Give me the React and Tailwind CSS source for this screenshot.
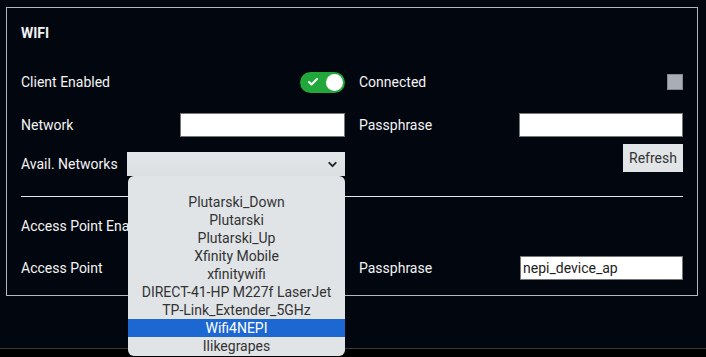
import { Check, ChevronDown } from 'lucide-react'

const networks = [
  'Plutarski_Down',
  'Plutarski',
  'Plutarski_Up',
  'Xfinity Mobile',
  'xfinitywifi',
  'DIRECT-41-HP M227f LaserJet',
  'TP-Link_Extender_5GHz',
  'Wifi4NEPI',
  'Ilikegrapes',
]

function Toggle() {
  return (
    <div className="flex h-[21px] w-[45px] items-center justify-between rounded-full bg-[#22a73a] pl-[7px] pr-[2px]">
      <Check size={12} strokeWidth={4} className="text-white" />
      <div className="h-[17px] w-[17px] rounded-full bg-white" />
    </div>
  )
}

function TextInput({ value = '', className = '' }) {
  return (
    <div className={`flex h-[24px] items-center border border-[#767676] bg-white px-[2px] text-[14px] text-[#222] ${className}`}>
      {value}
    </div>
  )
}

export default function App() {
  return (
    <div className="flex h-[357px] w-[706px] flex-col overflow-hidden bg-[#02070f] font-['Roboto',sans-serif] text-[14px] text-[#f4f4f4]">
      <div className="flex-1 pl-[6px] pt-[7px]">
        <div className="h-[289px] w-[692px] border border-[#b3b7bb] pl-[14px] pr-[14px] pt-[15px]">
          <h2 className="h-[20px] font-bold leading-[20px]">WIFI</h2>

          <div className="mt-[27px] grid grid-cols-2 gap-x-[14px]">
            {/* left column */}
            <div className="flex flex-col">
              <div className="flex h-[24px] items-center justify-between">
                <span>Client Enabled</span>
                <Toggle />
              </div>
              <div className="mt-[19px] flex h-[24px] items-center justify-between">
                <span>Network</span>
                <TextInput className="w-[165px]" />
              </div>
              <div className="mt-[15px] flex h-[24px] items-center justify-between">
                <span>Avail. Networks</span>
                <div className="relative">
                  <div className="flex h-[24px] w-[218px] items-center justify-end bg-gradient-to-b from-[#e4e7ea] to-[#dcdfe2] pr-[6px]">
                    <ChevronDown size={13} strokeWidth={3.5} className="text-[#222]" />
                  </div>
                  <ul className="absolute left-[1px] top-[24px] z-10 w-[217px] rounded-[6px] bg-[#e0e4e7] pb-[1px] pt-[17px] text-center text-[14px] text-[#333]">
                    {networks.map((n) => (
                      <li
                        key={n}
                        className={`h-[18px] leading-[18px] ${n === 'Wifi4NEPI' ? 'bg-[#1c67d2] text-white' : ''}`}
                      >
                        {n}
                      </li>
                    ))}
                  </ul>
                </div>
              </div>
            </div>

            {/* right column */}
            <div className="flex flex-col">
              <div className="flex h-[24px] items-center justify-between">
                <span>Connected</span>
                <div className="h-[16px] w-[16px] border border-[#85898f] bg-[#a9adb5]" />
              </div>
              <div className="mt-[19px] flex h-[24px] items-center justify-between">
                <span>Passphrase</span>
                <TextInput className="w-[164px]" />
              </div>
              <div className="mt-[7px] flex justify-end">
                <button className="h-[28px] w-[60px] bg-[#e1e5e8] text-[14px] text-[#333]">Refresh</button>
              </div>
            </div>
          </div>

          <hr className="mt-[20px] border-t border-[#e8e8e8]" />

          <div className="mt-[17px] grid grid-cols-2 gap-x-[14px]">
            <div className="flex flex-col">
              <div className="flex h-[24px] items-center">
                <span>Access Point Enabled</span>
              </div>
              <div className="mt-[18px] flex h-[24px] items-center justify-between">
                <span>Access Point</span>
                <TextInput className="w-[165px]" />
              </div>
            </div>
            <div className="flex flex-col">
              <div className="h-[24px]" />
              <div className="mt-[18px] flex h-[24px] items-center justify-between">
                <span>Passphrase</span>
                <TextInput className="w-[163px]" value="nepi_device_ap" />
              </div>
            </div>
          </div>
        </div>
      </div>
      <div className="h-[9px] border-t border-[#3a3a3a] bg-black" />
    </div>
  )
}
